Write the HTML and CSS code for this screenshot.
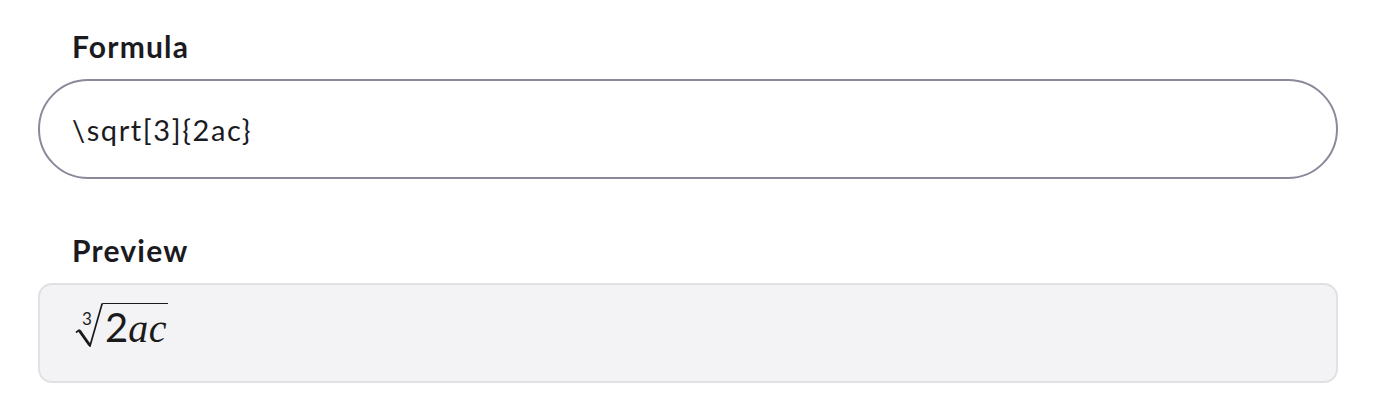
FILE: index.html
```html
<!DOCTYPE html>
<html>
<head>
<meta charset="utf-8">
<link rel="stylesheet" href="styles.css">
</head>
<body>
<div class="page">
  <div class="field">
    <label class="label">Formula</label>
    <div class="input">\sqrt[3]{2ac}</div>
  </div>
  <div class="field preview-field">
    <div class="label">Preview</div>
    <div class="preview">
      <span class="math">
        <span class="root-index">3</span><svg class="radical" width="28" height="44" viewBox="0 0 28 44"><path d="M1 29.5 L4 27.2 L15 43 L27 1 L28 1" fill="none" stroke="#1a1a1a" stroke-width="1.7" stroke-linejoin="miter" stroke-linecap="butt"/><path d="M4.4 27.6 L14.6 42" fill="none" stroke="#1a1a1a" stroke-width="2.8"/></svg><span class="radicand"><span class="num">2</span><span class="var">ac</span></span>
      </span>
    </div>
  </div>
</div>
</body>
</html>
```
FILE: styles.css
```css
* { box-sizing: border-box; }
body {
  margin: 0;
  background: #ffffff;
  font-family: "Lato", "Noto Sans", sans-serif;
  color: #1a1a1a;
}
.page {
  padding: 26px 38px 0 38px;
  display: flex;
  flex-direction: column;
  gap: 51px;
}
.field {
  display: flex;
  flex-direction: column;
}
.label {
  font-size: 30px;
  font-weight: 700;
  letter-spacing: 1.2px;
  padding-left: 34px;
  line-height: 40px;
  margin-bottom: 13px;
  color: #1b1b1f;
}
.input {
  height: 100px;
  border: 2px solid #8d899b;
  border-radius: 50px;
  padding: 0 32px;
  display: flex;
  align-items: center;
  font-size: 29px;
  letter-spacing: 1.6px;
  color: #1b1b1f;
}
.preview-field .label { margin-bottom: 13px; }
.preview {
  height: 100px;
  background: #f3f3f5;
  border: 2px solid #e1e1e5;
  border-radius: 14px;
  padding: 18px 35px 0 35px;
}
.math {
  display: inline-flex;
  align-items: flex-start;
  position: relative;
}
.root-index {
  position: absolute;
  left: 7px;
  top: 7px;
  font-size: 17px;
  line-height: 17px;
  font-family: "Lato", sans-serif;
}
.radical {
  display: block;
}
.radicand {
  display: block;
  border-top: 1.7px solid #1a1a1a;
  margin-top: 0.3px;
  line-height: 40px;
  height: 44px;
  font-size: 40px;
  padding-top: 3px;
  padding-left: 2px;
  padding-right: 1px;
}
.num {
  font-family: "Lato", sans-serif;
}
.var {
  font-family: "Liberation Serif", serif;
  font-style: italic;
  letter-spacing: 0.5px;
}
```
